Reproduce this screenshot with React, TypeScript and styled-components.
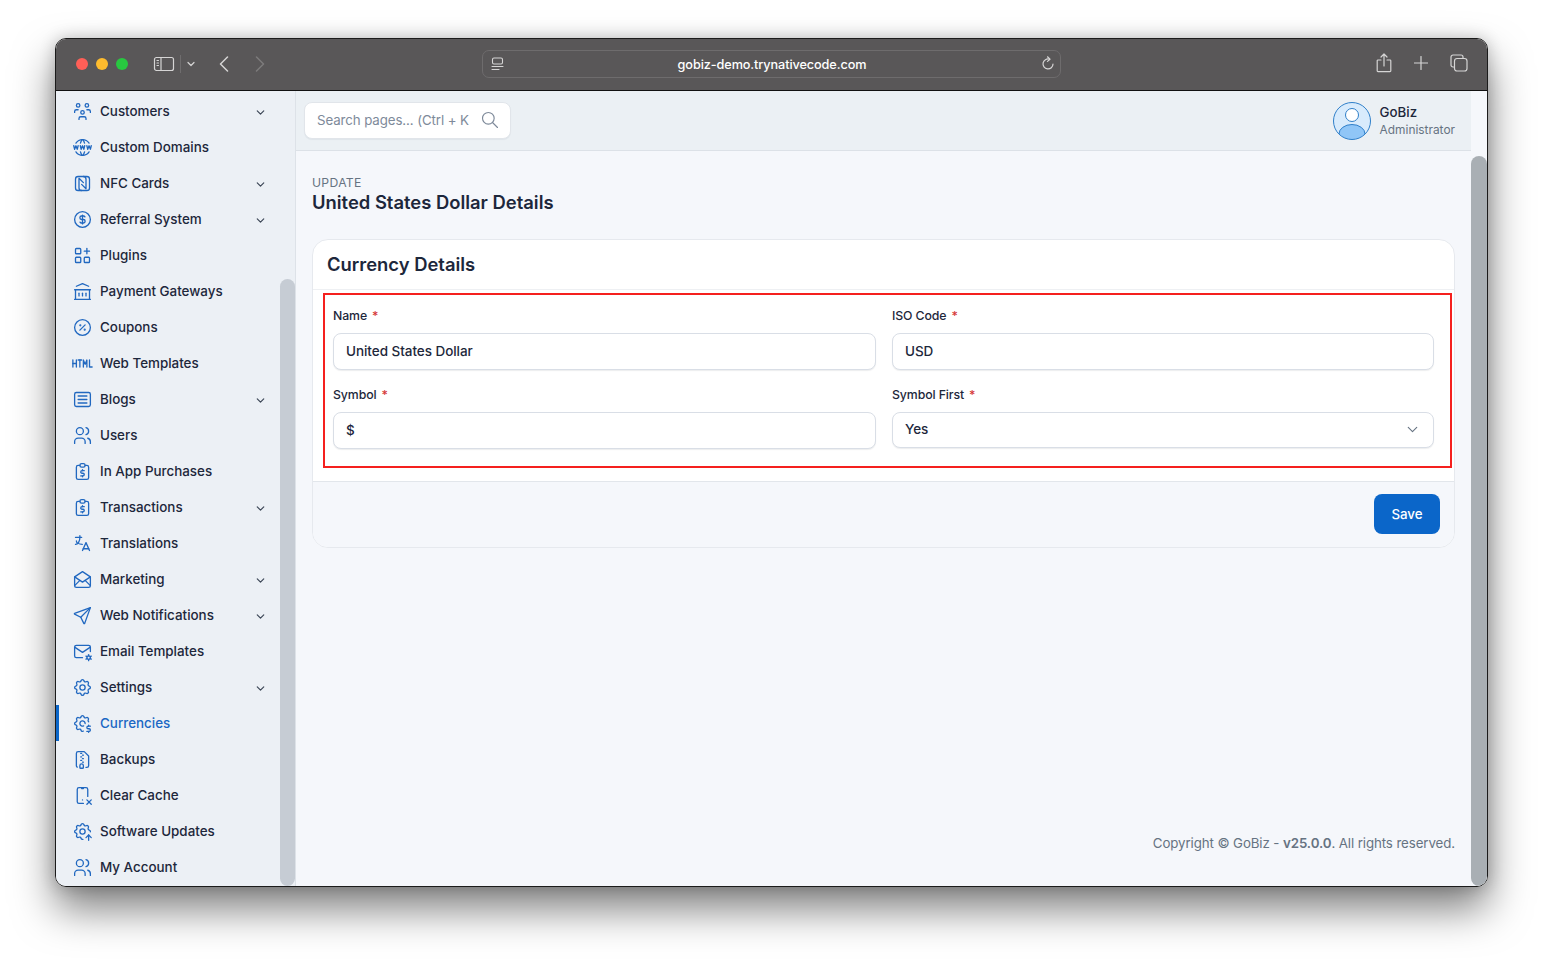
import React from "react"
import styled, { createGlobalStyle } from "styled-components"
import {
  TbApps,
  TbArticle,
  TbBuildingBank,
  TbChevronDown,
  TbCoin,
  TbDeviceMobileX,
  TbDiscount,
  TbFileZip,
  TbHtml,
  TbLanguage,
  TbMailCog,
  TbMailOpened,
  TbNfc,
  TbReportMoney,
  TbSearch,
  TbSend,
  TbSettings,
  TbSettingsDollar,
  TbSettingsUp,
  TbUsers,
  TbUsersGroup,
  TbWorldWww,
} from "react-icons/tb"

const navItems = [
  { label: "Customers", icon: TbUsersGroup, caret: true },
  { label: "Custom Domains", icon: TbWorldWww },
  { label: "NFC Cards", icon: TbNfc, caret: true },
  { label: "Referral System", icon: TbCoin, caret: true },
  { label: "Plugins", icon: TbApps },
  { label: "Payment Gateways", icon: TbBuildingBank },
  { label: "Coupons", icon: TbDiscount },
  { label: "Web Templates", icon: TbHtml },
  { label: "Blogs", icon: TbArticle, caret: true },
  { label: "Users", icon: TbUsers },
  { label: "In App Purchases", icon: TbReportMoney },
  { label: "Transactions", icon: TbReportMoney, caret: true },
  { label: "Translations", icon: TbLanguage },
  { label: "Marketing", icon: TbMailOpened, caret: true },
  { label: "Web Notifications", icon: TbSend, caret: true },
  { label: "Email Templates", icon: TbMailCog },
  { label: "Settings", icon: TbSettings, caret: true },
  { label: "Currencies", icon: TbSettingsDollar, active: true },
  { label: "Backups", icon: TbFileZip },
  { label: "Clear Cache", icon: TbDeviceMobileX },
  { label: "Software Updates", icon: TbSettingsUp },
  { label: "My Account", icon: TbUsers },
]

export default function App() {
  return (
    <>
      <GlobalStyle />
      <Stage>
        <BrowserWindow>
          <TitleBar>
            <Lights>
              <Light $color="#ff5f57" />
              <Light $color="#febc2e" />
              <Light $color="#28c840" />
            </Lights>
            <ToolIcon width="22" height="16" viewBox="0 0 22 16">
              <rect x="1.5" y="1.5" width="19" height="13" rx="2" />
              <path d="M8 1.5v13M4 4.5h1.5M4 7h1.5M4 9.5h1.5" />
            </ToolIcon>
            <ToolDivider />
            <ToolIcon width="8" height="6" viewBox="0 0 8 6">
              <path d="M1 1.5l3 3 3-3" />
            </ToolIcon>
            <BackIcon width="10" height="16" viewBox="0 0 10 16">
              <path d="M8.5 1L1.5 8l7 7" />
            </BackIcon>
            <ForwardIcon width="10" height="16" viewBox="0 0 10 16">
              <path d="M1.5 1l7 7-7 7" />
            </ForwardIcon>
            <AddressBar>
              <PageIcon width="14" height="14" viewBox="0 0 14 14">
                <rect x="1.5" y="1" width="10" height="6" rx="1.5" />
                <path d="M1 9.5h11M1 12.5h7" />
              </PageIcon>
              <AddressText>gobiz-demo.trynativecode.com</AddressText>
              <ToolIcon width="14" height="15" viewBox="0 0 14 15">
                <path d="M8.5 3.2A5 5 0 1 0 12 8" />
                <path d="M6.5 0.8L9 3.2 6.5 5.4" />
              </ToolIcon>
            </AddressBar>
            <RightTools>
              <ToolIcon width="16" height="20" viewBox="0 0 16 20">
                <path d="M5 7H2a.8.8 0 0 0-.8.8v10a.8.8 0 0 0 .8.8h12a.8.8 0 0 0 .8-.8v-10A.8.8 0 0 0 14 7h-3" />
                <path d="M8 13V1.5M5 4l3-3 3 3" />
              </ToolIcon>
              <ToolIcon width="14" height="14" viewBox="0 0 14 14">
                <path d="M7 0.5v13M0.5 7h13" />
              </ToolIcon>
              <ToolIcon width="18" height="18" viewBox="0 0 18 18">
                <path d="M3.5 13H3a2 2 0 0 1-2-2V3a2 2 0 0 1 2-2h8a2 2 0 0 1 2 2v1" />
                <rect x="4.5" y="4.5" width="12.5" height="12.5" rx="2.5" />
              </ToolIcon>
            </RightTools>
          </TitleBar>
          <Body>
            <Sidebar>
              <NavList>
                {navItems.map((item) => (
                  <NavRow key={item.label} $active={item.active}>
                    <NavIcon>
                      <item.icon />
                    </NavIcon>
                    <NavLabel>{item.label}</NavLabel>
                    {item.caret && <NavCaret />}
                  </NavRow>
                ))}
              </NavList>
              <SidebarTrack>
                <SidebarThumb />
              </SidebarTrack>
            </Sidebar>
            <Main>
              <MainColumn>
                <Header>
                  <SearchBox>
                    <SearchText>Search pages... (Ctrl + K</SearchText>
                    <SearchIcon />
                  </SearchBox>
                  <Profile>
                    <svg width="38" height="38" viewBox="0 0 38 38">
                      <defs>
                        <clipPath id="avatar-clip">
                          <circle cx="19" cy="19" r="18.5" />
                        </clipPath>
                      </defs>
                      <circle cx="19" cy="19" r="18.5" fill="#d8ebfc" />
                      <g clipPath="url(#avatar-clip)">
                        <ellipse cx="19" cy="32" rx="13" ry="9.5" fill="#90c6f7" stroke="#2f7fc9" />
                      </g>
                      <circle cx="19" cy="13" r="6.5" fill="#fff" stroke="#2f7fc9" />
                      <circle cx="19" cy="19" r="18.5" fill="none" stroke="#2f7fc9" />
                    </svg>
                    <ProfileText>
                      <ProfileName>GoBiz</ProfileName>
                      <ProfileRole>Administrator</ProfileRole>
                    </ProfileText>
                  </Profile>
                </Header>
                <Content>
                  <Pretitle>UPDATE</Pretitle>
                  <PageTitle>United States Dollar Details</PageTitle>
                  <Card>
                    <CardHeader>Currency Details</CardHeader>
                    <HighlightBox>
                      <FormGrid>
                        <Field>
                          <FieldLabel>Name</FieldLabel>
                          <TextValue>United States Dollar</TextValue>
                        </Field>
                        <Field>
                          <FieldLabel>ISO Code</FieldLabel>
                          <TextValue>USD</TextValue>
                        </Field>
                        <Field>
                          <FieldLabel>Symbol</FieldLabel>
                          <TextValue>$</TextValue>
                        </Field>
                        <Field>
                          <FieldLabel>Symbol First</FieldLabel>
                          <SelectValue>
                            Yes
                            <SelectCaret />
                          </SelectValue>
                        </Field>
                      </FormGrid>
                    </HighlightBox>
                    <CardFooter>
                      <SaveButton>Save</SaveButton>
                    </CardFooter>
                  </Card>
                  <Copyright>
                    Copyright © GoBiz - <b>v25.0.0</b>. All rights reserved.
                  </Copyright>
                </Content>
              </MainColumn>
              <MainTrack>
                <MainThumb />
              </MainTrack>
            </Main>
          </Body>
        </BrowserWindow>
      </Stage>
    </>
  )
}

const GlobalStyle = createGlobalStyle`
  * {
    box-sizing: border-box;
  }

  html, body {
    margin: 0;
    background: #ffffff;
  }

  body {
    font-family: "Inter", "Liberation Sans", sans-serif;
    color: #1d273b;
  }
`

const Stage = styled.div`
  width: 1543px;
  height: 960px;
  padding: 38px 56px 0 55px;
  overflow: hidden;
`

const BrowserWindow = styled.div`
  width: 1433px;
  height: 849px;
  display: flex;
  flex-direction: column;
  border: 1px solid #1b1b1b;
  border-radius: 11px;
  overflow: hidden;
  box-shadow: 0 22px 42px rgba(0, 0, 0, 0.5), 0 0 16px rgba(0, 0, 0, 0.2);
`

const TitleBar = styled.div`
  height: 52px;
  flex-shrink: 0;
  display: flex;
  align-items: center;
  padding: 0 19px 2px 20px;
  background: #595758;
  border-bottom: 1px solid #111111;
`

const Lights = styled.div`
  display: flex;
  gap: 8px;
  margin-right: 25px;
`

const Light = styled.span<{ $color: string }>`
  width: 12px;
  height: 12px;
  border-radius: 50%;
  background: ${({ $color }) => $color};
`

const ToolIcon = styled.svg`
  flex-shrink: 0;
  fill: none;
  stroke: #d6d5d5;
  stroke-width: 1.2;
  stroke-linecap: round;
  stroke-linejoin: round;
`

const ToolDivider = styled.span`
  width: 1px;
  height: 18px;
  margin: 0 6px 0 5px;
  background: #6f6d6e;
`

const BackIcon = styled(ToolIcon)`
  margin-left: 24px;
  stroke-width: 1.5;
`

const ForwardIcon = styled(ToolIcon)`
  margin-left: 26px;
  stroke: #7d7b7c;
  stroke-width: 1.5;
`

const AddressBar = styled.div`
  width: 579px;
  height: 28px;
  margin-left: 217px;
  display: flex;
  align-items: center;
  padding: 0 5px 0 8px;
  border: 1px solid #6e6c6d;
  border-radius: 7px;
`

const PageIcon = styled(ToolIcon)`
  stroke-width: 1.1;
`

const AddressText = styled.span`
  flex: 1;
  padding: 1px 2px 0 0;
  text-align: center;
  font-size: 12.7px;
  font-weight: 500;
  letter-spacing: -0.1px;
  color: #ffffff;
`

const RightTools = styled.div`
  margin-left: auto;
  padding-bottom: 1px;
  display: flex;
  align-items: center;
  gap: 22px;
`

const Body = styled.div`
  flex: 1;
  min-height: 0;
  display: flex;
`

const Sidebar = styled.aside`
  width: 240px;
  flex-shrink: 0;
  display: flex;
  background: #ecf0f5;
  border-right: 1px solid #dde2e8;
  overflow: hidden;
`

const NavList = styled.nav`
  flex: 1;
  padding-top: 2px;
`

const NavRow = styled.div<{ $active?: boolean }>`
  height: 36px;
  display: flex;
  align-items: center;
  padding: 0 13px 0 16px;
  color: ${({ $active }) => ($active ? "#1a67c4" : "#1d273b")};
  box-shadow: ${({ $active }) => ($active ? "inset 3px 0 0 #0b66c9" : "none")};
`

const NavIcon = styled.span`
  width: 20px;
  height: 20px;
  margin-right: 8px;
  display: flex;
  align-items: center;
  justify-content: center;
  color: #2168c0;

  svg {
    width: 21px;
    height: 21px;
    flex-shrink: 0;
    stroke-width: 1.5;
  }
`

const NavLabel = styled.span`
  flex: 1;
  font-size: 13.4px;
  font-weight: 500;
  white-space: nowrap;
`

const NavCaret = styled(TbChevronDown)`
  width: 13px;
  height: 13px;
  margin-top: 3px;
  color: #3c4656;
  stroke-width: 2.2;
`

const SidebarTrack = styled.div`
  width: 15px;
  flex-shrink: 0;
  padding-top: 188px;
`

const SidebarThumb = styled.div`
  height: 100%;
  border-radius: 8px;
  background: #c6ccd4;
`

const Main = styled.main`
  flex: 1;
  min-width: 0;
  display: flex;
  background: #f5f7fb;
`

const MainColumn = styled.div`
  flex: 1;
  min-width: 0;
  display: flex;
  flex-direction: column;
`

const Header = styled.header`
  height: 60px;
  flex-shrink: 0;
  display: flex;
  align-items: center;
  justify-content: space-between;
  padding: 0 16px 0 8px;
  background: #ebf0f4;
  border-bottom: 1px solid #dce1e7;
`

const SearchBox = styled.div`
  width: 207px;
  height: 37px;
  display: flex;
  align-items: center;
  justify-content: space-between;
  padding: 0 10px 2px 12px;
  background: #ffffff;
  border: 1px solid #e1e5ea;
  border-radius: 8px;
  box-shadow: 0 1px 1px rgba(24, 36, 51, 0.05);
`

const SearchText = styled.span`
  font-size: 13.3px;
  letter-spacing: -0.1px;
  color: #7e8a9a;
  white-space: nowrap;
`

const SearchIcon = styled(TbSearch)`
  width: 20px;
  height: 20px;
  flex-shrink: 0;
  color: #7e8a9a;
  stroke-width: 1.4;
`

const Profile = styled.div`
  display: flex;
  align-items: center;
  gap: 9px;
`

const ProfileText = styled.div`
  display: flex;
  flex-direction: column;
  gap: 2px;
  padding-bottom: 2px;
`

const ProfileName = styled.span`
  font-size: 13.3px;
  font-weight: 500;
  line-height: 18px;
`

const ProfileRole = styled.span`
  font-size: 11.9px;
  line-height: 14px;
  color: #667382;
`

const Content = styled.div`
  flex: 1;
  min-height: 0;
  display: flex;
  flex-direction: column;
  padding: 24px 16px 35px;
`

const Pretitle = styled.div`
  font-size: 12.2px;
  line-height: 15px;
  letter-spacing: 0.3px;
  color: #667382;
`

const PageTitle = styled.h1`
  margin: 0 0 25px;
  font-size: 18.4px;
  line-height: 24px;
  font-weight: 600;
`

const Card = styled.section`
  background: #ffffff;
  border: 1px solid #e6e9ee;
  border-radius: 16px;
  overflow: hidden;
`

const CardHeader = styled.h2`
  height: 50px;
  margin: 0;
  padding: 0 14px 2px;
  display: flex;
  align-items: center;
  font-size: 18.4px;
  font-weight: 600;
  border-bottom: 1px solid #eef0f3;
`

const HighlightBox = styled.div`
  height: 175px;
  margin: 3px 2px 13px 10px;
  padding: 9px 16px 0 8px;
  border: 2px solid #f5201e;
`

const FormGrid = styled.div`
  display: grid;
  grid-template-columns: 543px 542px;
  column-gap: 16px;
  row-gap: 13px;
`

const Field = styled.div`
  display: flex;
  flex-direction: column;
`

const FieldLabel = styled.label`
  height: 29px;
  display: flex;
  align-items: center;
  font-size: 12.3px;
  font-weight: 500;
  letter-spacing: -0.1px;
  padding-bottom: 6px;

  &::after {
    content: "*";
    margin-left: 5px;
    color: #d63939;
  }
`

const TextValue = styled.div`
  height: 37px;
  display: flex;
  align-items: center;
  padding: 0 12px 2px;
  font-size: 13.5px;
  font-weight: 500;
  letter-spacing: -0.05px;
  background: #ffffff;
  border: 1px solid #d9dee6;
  border-radius: 8px;
  box-shadow: 0 1px 1px rgba(24, 36, 51, 0.08);
`

const SelectValue = styled(TextValue)`
  height: 36px;
  justify-content: space-between;
`

const SelectCaret = styled(TbChevronDown)`
  width: 17px;
  height: 17px;
  color: #667382;
  stroke-width: 1.6;
`

const CardFooter = styled.div`
  height: 66px;
  display: flex;
  align-items: center;
  justify-content: flex-end;
  padding: 0 14px 2px;
  background: #f5f7fb;
  border-top: 1px solid #e2e6eb;
`

const SaveButton = styled.button`
  width: 66px;
  height: 40px;
  padding: 0;
  font-family: inherit;
  font-size: 13.3px;
  font-weight: 500;
  color: #ffffff;
  background: #0b66c9;
  border: 0;
  border-radius: 8px;
`

const Copyright = styled.div`
  margin-top: auto;
  text-align: right;
  font-size: 13.3px;
  letter-spacing: -0.1px;
  color: #667382;

  b {
    font-weight: 600;
  }
`

const MainTrack = styled.div`
  width: 16px;
  flex-shrink: 0;
  padding-top: 65px;
`

const MainThumb = styled.div`
  height: 100%;
  border-radius: 8px;
  background: #a9afb4;
`
